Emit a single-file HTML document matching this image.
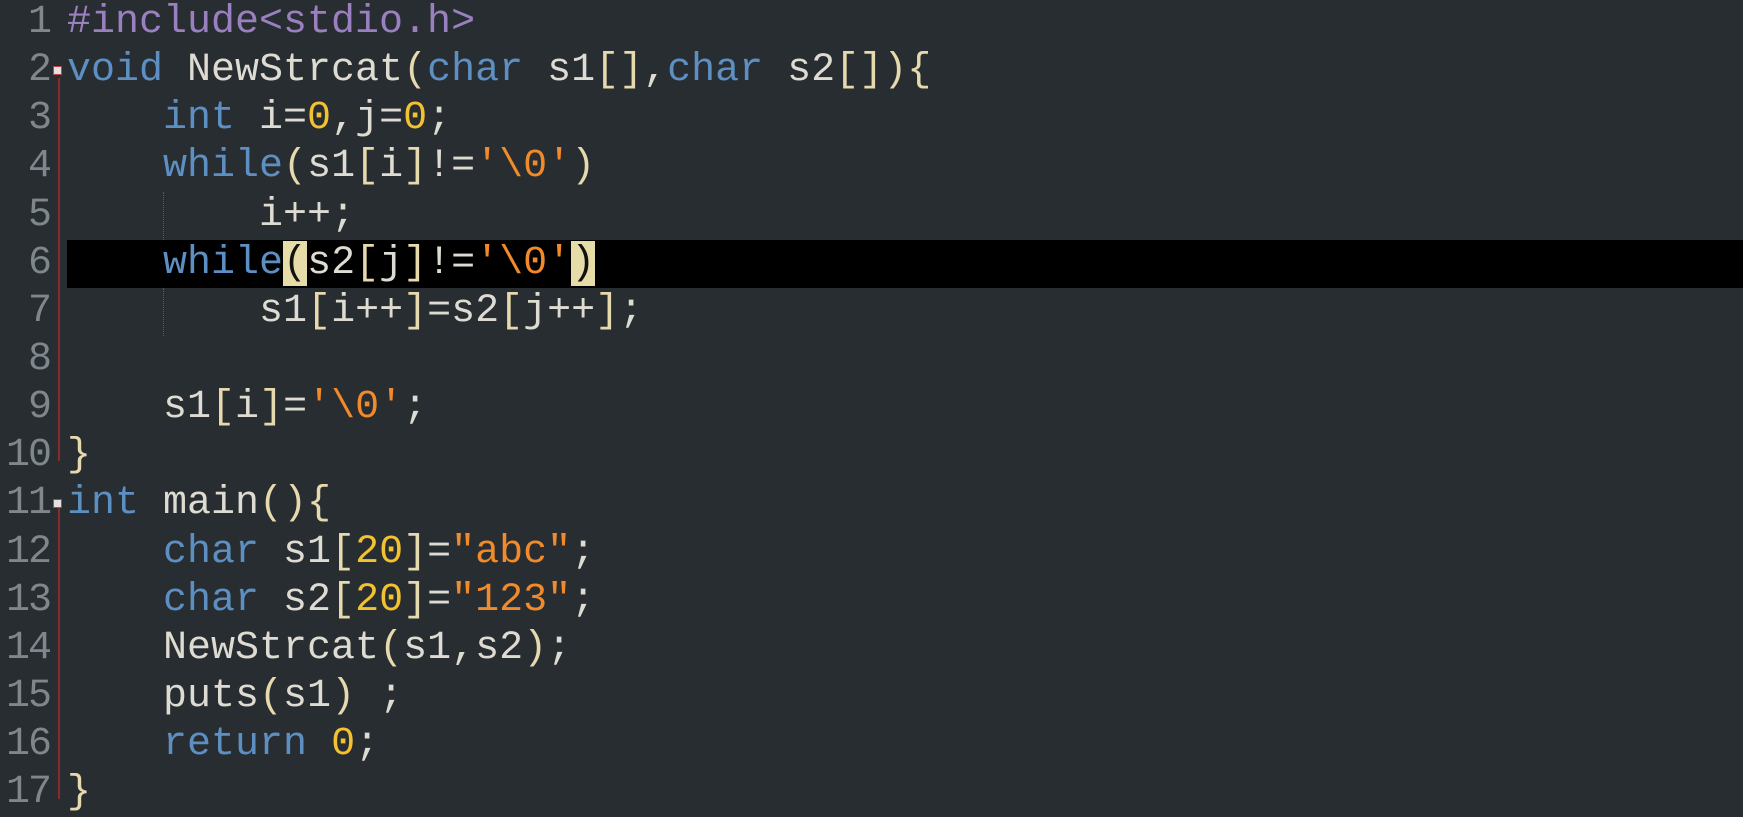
<!DOCTYPE html>
<html><head><style>
body{margin:0;width:1743px;height:799px;background:#272d31;overflow:hidden;position:relative;font-family:"Liberation Mono","Noto Sans CJK SC",monospace;font-size:40px;}
.ln{position:absolute;left:0;width:50px;text-align:right;color:#7f878c;height:48px;line-height:48px;letter-spacing:-2px}
.c{position:absolute;left:67px;height:48px;line-height:48px;white-space:pre;color:#dedcd2}
.k{color:#5d8fc2}.p{color:#9a80c0}.n{color:#f2c230}.s{color:#f08a2a}.b{color:#e6d9ad}
.hl{position:absolute;left:67px;right:0;top:240px;height:48px;background:#000}
.m{background:#e6dca8;color:#111}
.fold{position:absolute;left:58px;width:2px;background:#8a2a2a}
.box{position:absolute;left:53px;width:7px;height:7px;background:#e8e0e0;border:1px solid #c04040}
.g{position:absolute;left:163px;border-left:1px dotted #555b60;height:48px}
</style></head><body>
<div class="hl"></div>
<div class="fold" style="top:78px;height:383px"></div>
<div class="fold" style="top:508px;height:291px"></div>
<div class="box" style="top:66px"></div>
<div class="box" style="top:499px"></div>
<div class="g" style="top:192px"></div>
<div class="g" style="top:288px"></div>

<div class="ln" style="top:-1px">1</div>
<div class="ln" style="top:47px">2</div>
<div class="ln" style="top:95px">3</div>
<div class="ln" style="top:143px">4</div>
<div class="ln" style="top:192px">5</div>
<div class="ln" style="top:240px">6</div>
<div class="ln" style="top:288px">7</div>
<div class="ln" style="top:336px">8</div>
<div class="ln" style="top:384px">9</div>
<div class="ln" style="top:432px">10</div>
<div class="ln" style="top:480px">11</div>
<div class="ln" style="top:529px">12</div>
<div class="ln" style="top:577px">13</div>
<div class="ln" style="top:625px">14</div>
<div class="ln" style="top:673px">15</div>
<div class="ln" style="top:721px">16</div>
<div class="ln" style="top:769px">17</div>

<div class="c p" style="top:-1px">#include&lt;stdio.h&gt;</div>
<div class="c" style="top:47px"><span class="k">void</span> NewStrcat<span class="b">(</span><span class="k">char</span> s1<span class="b">[]</span>,<span class="k">char</span> s2<span class="b">[]</span><span class="b">){</span></div>
<div class="c" style="top:95px">    <span class="k">int</span> i=<span class="n">0</span>,j=<span class="n">0</span>;</div>
<div class="c" style="top:143px">    <span class="k">while</span><span class="b">(</span>s1<span class="b">[</span>i<span class="b">]</span>!=<span class="s">'\0'</span><span class="b">)</span></div>
<div class="c" style="top:192px">        i++;</div>
<div class="c" style="top:240px">    <span class="k">while</span><span class="m">(</span>s2<span class="b">[</span>j<span class="b">]</span>!=<span class="s">'\0'</span><span class="m">)</span></div>
<div class="c" style="top:288px">        s1<span class="b">[</span>i++<span class="b">]</span>=s2<span class="b">[</span>j++<span class="b">]</span>;</div>
<div class="c" style="top:384px">    s1<span class="b">[</span>i<span class="b">]</span>=<span class="s">'\0'</span>;</div>
<div class="c b" style="top:432px">}</div>
<div class="c" style="top:480px"><span class="k">int</span> main<span class="b">(){</span></div>
<div class="c" style="top:529px">    <span class="k">char</span> s1<span class="b">[</span><span class="n">20</span><span class="b">]</span>=<span class="s">"abc"</span>;</div>
<div class="c" style="top:577px">    <span class="k">char</span> s2<span class="b">[</span><span class="n">20</span><span class="b">]</span>=<span class="s">"123"</span>;</div>
<div class="c" style="top:625px">    NewStrcat<span class="b">(</span>s1,s2<span class="b">)</span>;</div>
<div class="c" style="top:673px">    puts<span class="b">(</span>s1<span class="b">)</span> ;</div>
<div class="c" style="top:721px">    <span class="k">return</span> <span class="n">0</span>;</div>
<div class="c b" style="top:769px">}</div>
</body></html>
